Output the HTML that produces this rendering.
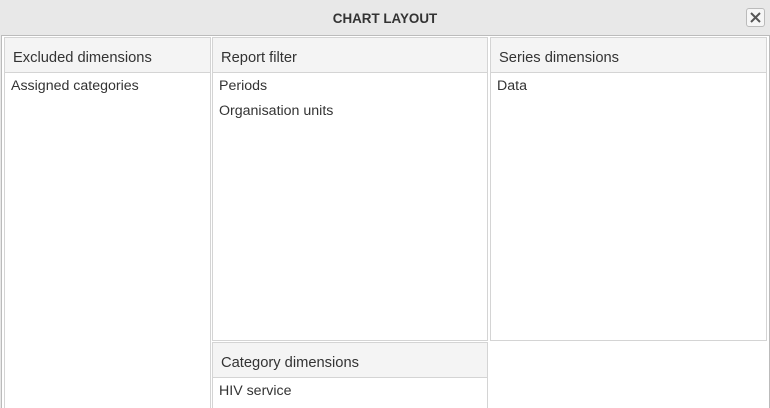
<!DOCTYPE html>
<html><head><style>
*{margin:0;padding:0;box-sizing:border-box}
html,body{width:770px;height:408px;overflow:hidden}
body{background:#e8e8e8;font-family:"Liberation Sans",Arial,sans-serif;position:relative}
.title{position:absolute;left:0;top:0;width:770px;height:35px;text-align:center;line-height:37px;font-size:13.4px;font-weight:bold;color:#333}
.close{position:absolute;left:746px;top:8px;width:19px;height:19px;border:1px solid #bbb;border-radius:3px;background:#f6f6f6}
.body{position:absolute;left:1px;top:35px;width:769px;height:373px;background:#fff;border-left:1px solid #bbb;border-top:1px solid #bbb;border-right:1px solid #bbb}
.p{position:absolute;border:1px solid #d4d4d4;background:#fff}
.h{height:35px;background:#f4f4f4;border-bottom:1px solid #d4d4d4;font-size:14.7px;color:#333;line-height:40px;padding-left:8px}
.i{font-size:14.2px;color:#333;padding-left:6px;line-height:25px;position:relative;top:1px}
</style></head><body>
<div class="title">CHART LAYOUT</div>
<div class="close"><svg width="17" height="17" viewBox="0 0 17 17"><path d="M4 4L13 13M13 4L4 13" stroke="#555" stroke-width="2"/></svg></div>
<div class="body"></div>
<div class="p" style="left:4px;top:37px;width:207px;height:380px"><div class="h">Excluded dimensions</div><div class="i">Assigned categories</div></div>
<div class="p" style="left:212px;top:37px;width:276px;height:304px"><div class="h">Report filter</div><div class="i">Periods</div><div class="i">Organisation units</div></div>
<div class="p" style="left:490px;top:37px;width:277px;height:304px"><div class="h">Series dimensions</div><div class="i">Data</div></div>
<div class="p" style="left:212px;top:342px;width:276px;height:80px"><div class="h">Category dimensions</div><div class="i">HIV service</div></div>
</body></html>
